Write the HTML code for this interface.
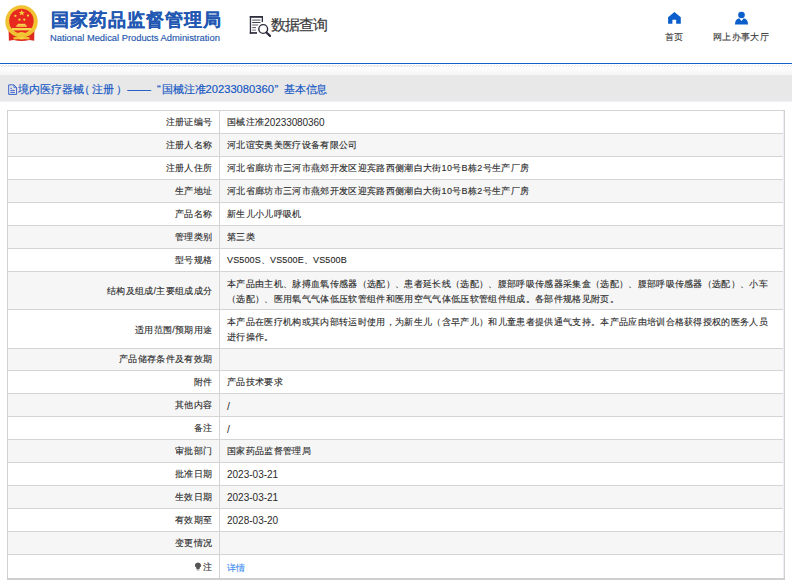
<!DOCTYPE html>
<html><head><meta charset="utf-8">
<style>
*{margin:0;padding:0;box-sizing:border-box}
html,body{width:792px;height:586px;overflow:hidden;background:#fff;font-family:"Liberation Sans",sans-serif;color:#2a2a2a}
.abs{position:absolute}
#title{left:50.5px;top:7px;font-size:18px;letter-spacing:1.1px;font-weight:bold;color:#2258b2;white-space:nowrap;line-height:26px;-webkit-text-stroke:0.2px #2258b2}
#eng{left:50px;top:32px;font-size:9.36px;color:#2458ae;-webkit-text-stroke:0.15px #2458ae;white-space:nowrap;line-height:12px}
#sjcx{left:270.5px;top:14px;font-size:15px;letter-spacing:-0.9px;color:#3a3a3a;-webkit-text-stroke:0.2px #3a3a3a;white-space:nowrap;line-height:22px}
.nav{font-size:9px;letter-spacing:0.33px;color:#383838;-webkit-text-stroke-width:0.1px;white-space:nowrap;line-height:12px}
#bline{left:0;top:63px;width:792px;height:1px;background:#1263cc}
#hatch{left:0;top:65px;width:792px;height:2px;background:repeating-linear-gradient(135deg,#e9e5e5 0 0.9px,#fff 0.9px 2.12px)}
#fade{left:0;top:67px;width:792px;height:8px;background:linear-gradient(#fff,#f4f4f4)}
#band{left:0;top:75px;width:792px;height:27px;background:#e8e8e8;border-bottom:1px solid #eef0f6}
.crumb{top:82px;font-size:11.2px;color:#1456c4;-webkit-text-stroke-width:0.15px;white-space:nowrap;line-height:14px}
.rb{position:absolute;left:8px;width:776px}
.hl{position:absolute;left:7px;width:778px;height:1px;background:#d4d4d4}
.lt,.vt{position:absolute;font-size:9px;letter-spacing:0.33px;-webkit-text-stroke-width:0.12px;line-height:15px;white-space:nowrap;display:flex;align-items:center}
.lt{left:8px;width:204.4px;justify-content:flex-end}
.vt{left:227px}
.dg{font-size:10px;letter-spacing:0;-webkit-text-stroke:0}
.sl{font-size:10.5px;position:relative;top:1px;-webkit-text-stroke:0}
</style></head><body>
<svg class="abs" style="left:0;top:0" width="50" height="50" viewBox="0 0 50 50">
  <path d="M8.6 30.5 L34.4 30.5 L34.2 40.8 L29.5 40 Q21.5 42.2 13.5 40 L8.9 40.8 Z" fill="#dc2a1e"/>
  <circle cx="21.5" cy="21.4" r="16.2" fill="#f1c232"/>
  <circle cx="21.4" cy="21" r="12.3" fill="#e6281f"/>
  <polygon points="21.8,9.6 22.6,11.9 25,11.9 23.1,13.3 23.8,15.6 21.8,14.2 19.8,15.6 20.5,13.3 18.6,11.9 21,11.9" fill="#f8d23e"/>
  <circle cx="15.4" cy="15.8" r="1.15" fill="#f8d23e"/>
  <circle cx="28" cy="15.6" r="1.15" fill="#f8d23e"/>
  <circle cx="19.5" cy="19.7" r="1.15" fill="#f8d23e"/>
  <circle cx="24.3" cy="19.7" r="1.15" fill="#f8d23e"/>
  <rect x="17.5" y="23.8" width="8" height="1.4" fill="#f6d44c"/>
  <rect x="16.3" y="25.2" width="10.4" height="1.6" fill="#f6d44c"/>
  <rect x="12" y="28" width="19.3" height="2.4" fill="#f6d44c"/>
  <path d="M9.3 31 Q21.5 38.5 33.7 31" fill="none" stroke="#f1c232" stroke-width="1.4"/>
  <ellipse cx="21.5" cy="33.6" rx="3.6" ry="1.7" fill="#f3c935"/>
  <path d="M13.5 37.2 Q21.5 36.2 29.5 37.2 L29.5 39.6 Q21.5 38.6 13.5 39.6 Z" fill="#f1c232"/>
  <ellipse cx="21.5" cy="38.2" rx="2.8" ry="1.3" fill="#f5d040"/>
</svg>
<div id="title" class="abs">国家药品监督管理局</div>
<div id="eng" class="abs">National Medical Products Administration</div>
<svg class="abs" style="left:249px;top:15px" width="24" height="23" viewBox="0 0 24 23">
  <rect x="0.8" y="1" width="1.3" height="17.8" fill="#2e2e3e"/>
  <rect x="0.8" y="1" width="13.2" height="1.8" fill="#2e2e3e"/>
  <rect x="12.7" y="1" width="1.3" height="6" fill="#2e2e3e"/>
  <rect x="0.8" y="17.1" width="7.2" height="1.7" fill="#2e2e3e"/>
  <rect x="3.2" y="4.4" width="8.3" height="1.5" fill="#8a8a94"/>
  <rect x="3.2" y="7" width="8.3" height="0.9" fill="#2e2e3e"/>
  <rect x="3.2" y="9.4" width="6" height="1.2" fill="#7a7a84"/>
  <rect x="3.2" y="12.3" width="3.8" height="0.8" fill="#2e2e3e"/>
  <rect x="3.2" y="14.5" width="3.8" height="1.4" fill="#9a9aa4"/>
  <circle cx="14.2" cy="14" r="4.4" fill="#fff" stroke="#2a2a3a" stroke-width="1.4"/>
  <path d="M17.4 17.5 L21 20.9" stroke="#2a2a3a" stroke-width="2.2" stroke-linecap="round"/>
</svg>
<div id="sjcx" class="abs">数据查询</div>
<svg class="abs" style="left:668px;top:11px" width="14" height="14" viewBox="0 0 14 14">
  <path d="M6.4 1 L12.8 6.2 L12.8 12.8 L8.2 12.8 L8.2 8.7 L4.4 8.7 L4.4 12.8 L0.1 12.8 L0.1 6.2 Z" fill="#0b5ecb"/>
</svg>
<div class="abs nav" style="left:665px;top:30.6px">首页</div>
<svg class="abs" style="left:734px;top:11px" width="15" height="14" viewBox="0 0 15 14">
  <circle cx="7.5" cy="4" r="3.3" fill="#0b5ecb"/>
  <path d="M1 13.5 Q1 8 5.2 7.3 L7.5 10 L9.8 7.3 Q14 8 14 13.5 Z" fill="#0b5ecb"/>
</svg>
<div class="abs nav" style="left:713px;top:30.6px">网上办事大厅</div>
<div id="bline" class="abs"></div>
<div id="hatch" class="abs"></div>
<div id="fade" class="abs"></div>
<div id="band" class="abs"></div>
<svg class="abs" style="left:8px;top:84px" width="10" height="12" viewBox="0 0 10 12">
  <path d="M0.7 0.9 L5.9 0.9 L8.6 3.6 L8.6 10.4 L0.7 10.4 Z" fill="none" stroke="#3a62cc" stroke-width="1"/>
  <path d="M5.9 0.9 L5.9 3.6 L8.6 3.6" fill="none" stroke="#3a62cc" stroke-width="0.8"/>
  <rect x="2.5" y="3.8" width="1.3" height="1.2" fill="#3a62cc"/>
  <rect x="2.4" y="5.9" width="4.4" height="1" fill="#3a62cc"/>
  <rect x="2.4" y="7.9" width="4.4" height="1" fill="#3a62cc"/>
</svg>
<div class="abs crumb" style="left:18px">境内医疗器械</div>
<div class="abs crumb" style="left:78.5px">（</div>
<div class="abs crumb" style="left:92px">注册</div>
<div class="abs crumb" style="left:116.3px">）</div>
<div class="abs crumb" style="left:127.2px;font-size:11.8px">——</div>
<div class="abs crumb" style="left:157px">“</div>
<div class="abs crumb" style="left:161.5px">国械注准20233080360</div>
<div class="abs crumb" style="left:274.5px">”</div>
<div class="abs crumb" style="left:284px;letter-spacing:-0.2px">基本信息</div>
<div class="rb" style="top:111px;height:22px;background:#fff"></div>
<div class="hl" style="top:110px"></div>
<div class="lt" style="top:111px;height:22px;padding-top:0px">注册证编号</div>
<div class="vt" style="top:111px;height:22px;padding-top:0px">国械注准<span class="dg" style="letter-spacing:-0.1px">20233080360</span></div>
<div class="rb" style="top:134px;height:22px;background:#f6f6f6"></div>
<div class="hl" style="top:133px"></div>
<div class="lt" style="top:134px;height:22px;padding-top:0px">注册人名称</div>
<div class="vt" style="top:134px;height:22px;padding-top:0px">河北谊安奥美医疗设备有限公司</div>
<div class="rb" style="top:157px;height:22px;background:#fff"></div>
<div class="hl" style="top:156px"></div>
<div class="lt" style="top:157px;height:22px;padding-top:0px">注册人住所</div>
<div class="vt" style="top:157px;height:22px;padding-top:0px">河北省廊坊市三河市燕郊开发区迎宾路西侧潮白大街10号B栋2号生产厂房</div>
<div class="rb" style="top:180px;height:22px;background:#f6f6f6"></div>
<div class="hl" style="top:179px"></div>
<div class="lt" style="top:180px;height:22px;padding-top:0px">生产地址</div>
<div class="vt" style="top:180px;height:22px;padding-top:0px">河北省廊坊市三河市燕郊开发区迎宾路西侧潮白大街10号B栋2号生产厂房</div>
<div class="rb" style="top:203px;height:22px;background:#fff"></div>
<div class="hl" style="top:202px"></div>
<div class="lt" style="top:203px;height:22px;padding-top:0px">产品名称</div>
<div class="vt" style="top:203px;height:22px;padding-top:0px">新生儿小儿呼吸机</div>
<div class="rb" style="top:226px;height:22px;background:#f6f6f6"></div>
<div class="hl" style="top:225px"></div>
<div class="lt" style="top:226px;height:22px;padding-top:0px">管理类别</div>
<div class="vt" style="top:226px;height:22px;padding-top:0px">第三类</div>
<div class="rb" style="top:249px;height:22px;background:#fff"></div>
<div class="hl" style="top:248px"></div>
<div class="lt" style="top:249px;height:22px;padding-top:0px">型号规格</div>
<div class="vt" style="top:249px;height:22px;padding-top:0px"><span style="letter-spacing:0.14px">VS500S、VS500E、VS500B</span></div>
<div class="rb" style="top:272px;height:37px;background:#f6f6f6"></div>
<div class="hl" style="top:271px"></div>
<div class="lt" style="top:272px;height:37px;padding-top:2px">结构及组成/主要组成成分</div>
<div class="vt" style="top:272px;height:37px;padding-top:2px">本产品由主机、脉搏血氧传感器（选配）、患者延长线（选配）、腹部呼吸传感器采集盒（选配）、腹部呼吸传感器（选配）、小车<br>（选配）、医用氧气气体低压软管组件和医用空气气体低压软管组件组成。各部件规格见附页。</div>
<div class="rb" style="top:310px;height:38px;background:#fff"></div>
<div class="hl" style="top:309px"></div>
<div class="lt" style="top:310px;height:38px;padding-top:2px">适用范围/预期用途</div>
<div class="vt" style="top:310px;height:38px;padding-top:2px">本产品在医疗机构或其内部转运时使用，为新生儿（含早产儿）和儿童患者提供通气支持。本产品应由培训合格获得授权的医务人员<br>进行操作。</div>
<div class="rb" style="top:349px;height:21px;background:#f6f6f6"></div>
<div class="hl" style="top:348px"></div>
<div class="lt" style="top:349px;height:21px;padding-top:0px">产品储存条件及有效期</div>
<div class="vt" style="top:349px;height:21px;padding-top:0px"></div>
<div class="rb" style="top:371px;height:22px;background:#fff"></div>
<div class="hl" style="top:370px"></div>
<div class="lt" style="top:371px;height:22px;padding-top:0px">附件</div>
<div class="vt" style="top:371px;height:22px;padding-top:0px">产品技术要求</div>
<div class="rb" style="top:394px;height:22px;background:#f6f6f6"></div>
<div class="hl" style="top:393px"></div>
<div class="lt" style="top:394px;height:22px;padding-top:0px">其他内容</div>
<div class="vt" style="top:394px;height:22px;padding-top:0px"><span class="sl">/</span></div>
<div class="rb" style="top:417px;height:22px;background:#fff"></div>
<div class="hl" style="top:416px"></div>
<div class="lt" style="top:417px;height:22px;padding-top:0px">备注</div>
<div class="vt" style="top:417px;height:22px;padding-top:0px"><span class="sl">/</span></div>
<div class="rb" style="top:440px;height:22px;background:#f6f6f6"></div>
<div class="hl" style="top:439px"></div>
<div class="lt" style="top:440px;height:22px;padding-top:0px">审批部门</div>
<div class="vt" style="top:440px;height:22px;padding-top:0px">国家药品监督管理局</div>
<div class="rb" style="top:463px;height:22px;background:#fff"></div>
<div class="hl" style="top:462px"></div>
<div class="lt" style="top:463px;height:22px;padding-top:0px">批准日期</div>
<div class="vt" style="top:463px;height:22px;padding-top:0px"><span class="dg">2023-03-21</span></div>
<div class="rb" style="top:486px;height:22px;background:#f6f6f6"></div>
<div class="hl" style="top:485px"></div>
<div class="lt" style="top:486px;height:22px;padding-top:0px">生效日期</div>
<div class="vt" style="top:486px;height:22px;padding-top:0px"><span class="dg">2023-03-21</span></div>
<div class="rb" style="top:509px;height:22px;background:#fff"></div>
<div class="hl" style="top:508px"></div>
<div class="lt" style="top:509px;height:22px;padding-top:0px">有效期至</div>
<div class="vt" style="top:509px;height:22px;padding-top:0px"><span class="dg">2028-03-20</span></div>
<div class="rb" style="top:532px;height:22px;background:#f6f6f6"></div>
<div class="hl" style="top:531px"></div>
<div class="lt" style="top:532px;height:22px;padding-top:0px">变更情况</div>
<div class="vt" style="top:532px;height:22px;padding-top:0px"></div>
<div class="rb" style="top:555px;height:23px;background:#fff"></div>
<div class="hl" style="top:554px"></div>
<div class="lt" style="top:555px;height:23px;padding-top:2px"><svg width="8" height="9" viewBox="0 0 8 9" style="margin-right:1px;position:relative;top:-1px"><path d="M2.2 5.6 Q0.6 4.5 0.9 3 Q1.3 0.5 4 0.5 Q6.7 0.5 7.1 3 Q7.4 4.5 5.8 5.6 L5.5 7.2 L2.5 7.2 Z" fill="#555"/><rect x="2.7" y="7.4" width="2.6" height="1.2" fill="#aaa"/></svg>注</div>
<div class="vt" style="top:555px;height:23px;padding-top:2px"><span style="color:#3a8af4;position:relative;top:1px">详情</span></div>
<div class="abs" style="left:783px;top:111px;width:1px;height:467px;background:#eceef6"></div>
<div class="abs" style="left:7px;top:110px;width:1px;height:470px;background:#d0d0d0"></div>
<div class="abs" style="left:784px;top:110px;width:1px;height:470px;background:#d0d0d0"></div>
<div class="abs" style="left:219px;top:110px;width:1px;height:468px;background:#d4d4d4"></div>
<div class="abs" style="left:7px;top:578px;width:778px;height:2px;background:#cfcfcf"></div>
</body></html>
